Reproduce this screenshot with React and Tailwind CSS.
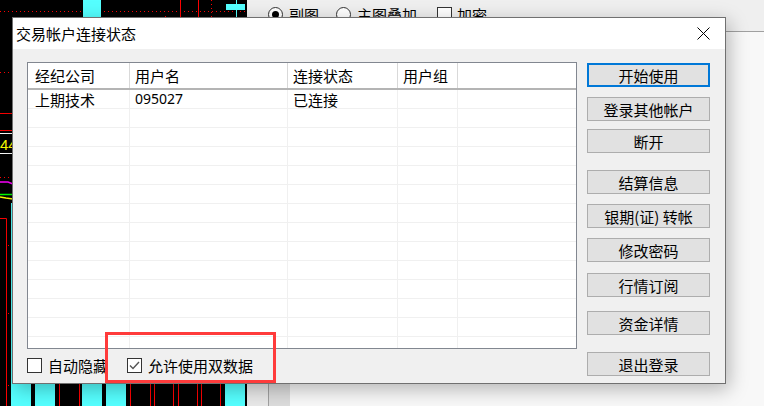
import React from "react";

const CJK = "font-['Noto_Sans_CJK_SC','Noto_Sans',sans-serif]";

function Chart() {
  const redBottom = [59, 79, 130, 150, 154, 173, 178, 197, 201, 220];
  const cyanBottom = [35, 82, 106, 225];
  return (
    <svg width="247" height="406" className="block shrink-0">
      <rect width="247" height="406" fill="#000" />
      {/* top strip */}
      <line x1="0" y1="11.5" x2="247" y2="11.5" stroke="#ff0000" strokeDasharray="1 3" />
      <rect x="83" y="0" width="18" height="60" fill="#55ffff" />
      <line x1="180.5" y1="0" x2="180.5" y2="60" stroke="#ff0000" />
      <line x1="198.5" y1="0" x2="198.5" y2="60" stroke="#ff0000" />
      <line x1="211.5" y1="0" x2="211.5" y2="60" stroke="#ff0000" strokeDasharray="1 3" />
      <line x1="165.5" y1="16" x2="165.5" y2="18" stroke="#ff0000" />
      <rect x="226" y="4" width="19" height="6" fill="#55ffff" />
      <line x1="236.5" y1="0" x2="236.5" y2="20" stroke="#55ffff" />
      {/* left strip */}
      <line x1="0" y1="72.5" x2="13" y2="72.5" stroke="#ff0000" strokeDasharray="1 3" />
      <line x1="0" y1="113.5" x2="13" y2="113.5" stroke="#ff0000" />
      <line x1="0" y1="130.5" x2="13" y2="130.5" stroke="#ff0000" />
      <rect x="-20" y="133.5" width="60" height="20" fill="none" stroke="#ffffff" />
      <text x="0" y="150" fill="#ffff00" fontSize="15" fontFamily="Liberation Sans, sans-serif">44</text>
      <line x1="0" y1="177.5" x2="13" y2="177.5" stroke="#ff0000" strokeDasharray="1 3" />
      <path d="M0 182 L8 182 L13 184" stroke="#ff00ff" strokeWidth="1.5" fill="none" />
      <line x1="0" y1="194.5" x2="13" y2="194.5" stroke="#00ff00" strokeWidth="1.5" />
      <path d="M0 197 L6 198 L13 199" stroke="#ffff00" strokeWidth="1.5" fill="none" />
      <rect x="11" y="203" width="20" height="203" fill="#55ffff" />
      <path d="M0 218.5 H6.5 V406" stroke="#ff0000" fill="none" />
      <rect x="8" y="245" width="1" height="1" fill="#ff0000" />
      <rect x="8" y="313" width="1" height="1" fill="#ff0000" />
      <rect x="8" y="385" width="1" height="1" fill="#ff0000" />
      {/* bottom strip */}
      {cyanBottom.map((x) => (
        <rect key={x} x={x} y="300" width="20" height="106" fill="#55ffff" />
      ))}
      {redBottom.map((x) => (
        <line key={x} x1={x + 0.5} y1="300" x2={x + 0.5} y2="406" stroke="#ff0000" />
      ))}
    </svg>
  );
}

function Radio({ checked, label }) {
  return (
    <div className="flex items-start">
      <div className="w-[15px] h-[15px] rounded-full border border-[#333] bg-white flex items-center justify-center">
        {checked && <div className="w-[7px] h-[7px] rounded-full bg-black" />}
      </div>
      <span className={`${CJK} text-[15px] leading-[15px] ml-[6px] text-black`}>{label}</span>
    </div>
  );
}

function Btn({ children, primary, className = "" }) {
  return (
    <div
      className={`h-[24px] w-[123px] flex items-center justify-center bg-[#e1e1e1] ${CJK} text-[15px] leading-none text-black ${
        primary ? "border-2 border-[#0078d7]" : "border border-[#adadad]"
      } ${className}`}
    >
      {children}
    </div>
  );
}

const COLS = ["w-[102px]", "w-[158px]", "w-[110px]", "w-[60px]"];

function BodyRow({ cells = [], last }) {
  return (
    <div className={`flex ${last ? "flex-1" : "h-[19px] border-b border-[#f0f0f0]"}`}>
      {COLS.map((w, i) => (
        <div
          key={i}
          className={`${w} shrink-0 border-r border-[#f0f0f0] flex items-center ${i === 0 ? "pl-[7px]" : "pl-[5px]"} ${
            i === 1 ? "font-['Noto_Sans','Liberation_Sans',sans-serif] text-[14px]" : `${CJK} text-[15px]`
          } leading-none text-black`}
        >
          {cells[i] || ""}
        </div>
      ))}
      <div className="flex-1" />
    </div>
  );
}

function Check({ checked, label, className = "" }) {
  return (
    <div className={`flex items-center ${className}`}>
      <div className="w-[15px] h-[15px] border border-[#333] bg-white flex items-center justify-center">
        {checked && (
          <svg width="11" height="9" viewBox="0 0 11 9">
            <path d="M1 4.5 L4 7.5 L10 1" stroke="#555" strokeWidth="1.4" fill="none" />
          </svg>
        )}
      </div>
      <span className={`${CJK} text-[15px] leading-none ml-[6px] text-black`}>{label}</span>
    </div>
  );
}

export default function App() {
  const headers = ["经纪公司", "用户名", "连接状态", "用户组"];
  return (
    <div className="relative w-[764px] h-[406px] overflow-hidden flex bg-white">
      <Chart />
      <div className="flex-1 flex flex-col bg-[#f8f8f8]">
        <div className="h-[32px] shrink-0 border-b border-[#a0a0a0] bg-[#efefef] flex items-start pt-[7px] pl-[21px]">
          <Radio checked label="副图" />
          <div className="ml-[17px]">
            <Radio label="主图叠加" />
          </div>
          <div className="ml-[20px] flex items-start">
            <div className="w-[15px] h-[15px] border border-[#333] bg-white" />
            <span className={`${CJK} text-[15px] leading-[15px] ml-[5px] text-black`}>加密</span>
          </div>
        </div>
        <div className="flex-1 flex flex-col justify-end">
          <div className="flex h-[40px]">
            <div className="w-[22px] bg-[#e8e8e8] border-r border-[#a0a0a0]" />
            <div className="w-[21px] bg-[#dcdcdc]" />
          </div>
        </div>
      </div>

      {/* dialog */}
      <div className="absolute left-[12px] top-[17px] w-[714px] h-[367px] border border-[#707070] bg-[#f0f0f0] flex flex-col shadow-[3px_5px_18px_rgba(0,0,0,0.28)]">
        <div className="h-[31px] shrink-0 bg-white flex items-center justify-between pl-[3px] pr-[15px]">
          <span className={`${CJK} text-[15px] leading-none text-black`}>交易帐户连接状态</span>
          <svg width="13" height="13" viewBox="0 0 13 13">
            <path d="M0.5 0.5 L12.5 12.5 M12.5 0.5 L0.5 12.5" stroke="#000" strokeWidth="1" />
          </svg>
        </div>
        <div className="flex-1 flex pl-[14px] pt-[13px]">
          <div className="flex flex-col">
            <div className="w-[550px] h-[287px] border border-[#828790] bg-white flex flex-col">
              <div className="h-[27px] shrink-0 flex border-b-2 border-[#b4b4b4]">
                {headers.map((h, i) => (
                  <div
                    key={h}
                    className={`${COLS[i]} shrink-0 border-r border-[#d9d9d9] flex items-center ${
                      i === 0 ? "pl-[7px]" : "pl-[5px]"
                    } ${CJK} text-[15px] leading-none text-black`}
                  >
                    {h}
                  </div>
                ))}
                <div className="flex-1" />
              </div>
              <BodyRow cells={["上期技术", "095027", "已连接"]} />
              {Array.from({ length: 12 }).map((_, i) => (
                <BodyRow key={i} />
              ))}
              <BodyRow last />
            </div>
            <div className="flex mt-[9px] h-[15px]">
              <Check label="自动隐藏" />
              <Check checked label="允许使用双数据" className="ml-[19px]" />
            </div>
          </div>
          <div className="ml-[10px] pt-[1px] flex flex-col">
            <Btn primary>开始使用</Btn>
            <Btn className="mt-[10px]">登录其他帐户</Btn>
            <Btn className="mt-[8px]">断开</Btn>
            <Btn className="mt-[17px]">结算信息</Btn>
            <Btn className="mt-[10px]">银期(证) 转帐</Btn>
            <Btn className="mt-[10px]">修改密码</Btn>
            <Btn className="mt-[11px]">行情订阅</Btn>
            <Btn className="mt-[14px]">资金详情</Btn>
            <Btn className="mt-[17px]">退出登录</Btn>
          </div>
        </div>
      </div>

      {/* red annotation box */}
      <div className="absolute left-[105px] top-[332px] w-[171px] h-[51px] border-[3px] border-[#ff3b3b]" />
    </div>
  );
}
